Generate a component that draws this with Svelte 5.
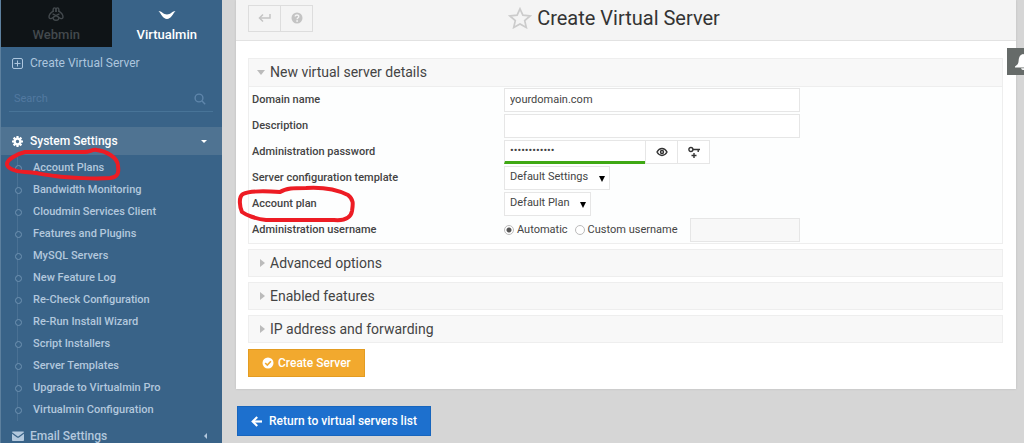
<script>
  const links = [
    'Account Plans',
    'Bandwidth Monitoring',
    'Cloudmin Services Client',
    'Features and Plugins',
    'MySQL Servers',
    'New Feature Log',
    'Re-Check Configuration',
    'Re-Run Install Wizard',
    'Script Installers',
    'Server Templates',
    'Upgrade to Virtualmin Pro',
    'Virtualmin Configuration'
  ];
  const closed = ['Advanced options', 'Enabled features', 'IP address and forwarding'];

  let domain = $state('yourdomain.com');
  let description = $state('');
  let password = $state('abcdefghijkl');
  let mode = $state('auto');
  let custom = $state('');
  let reveal = $state(false);
</script>

<div class="shell">
  <aside class="sidebar">
    <nav class="tabs" aria-label="Product">
      <a href="#webmin" class="tab">
        <svg width="16" height="14" viewBox="0 0 16 14" fill="none" stroke="currentColor" stroke-width="1.4" stroke-linejoin="round">
          <path d="M5.2 5V2.2a1.3 1.3 0 0 1 2.6 0V5M8.2 5V2.2a1.3 1.3 0 0 1 2.6 0V5" />
          <path d="M5.2 4.2C3 5.6 1 8 1 10c0 1.4 1.300 2 2.600 1.400L5.600 10.400M10.800 4.200C13 5.600 15 8 15 10c0 1.400-1.300 2-2.600 1.400L10.400 10.400" />
          <path d="M4.600 6.800L8 8.600l3.400-1.800M5.400 10.200C4.600 12 6 13.300 8 13.300s3.400-1.300 2.600-3.100L8 8.600z" />
        </svg>
        <span>Webmin</span>
      </a>
      <a href="#virtualmin" class="tab active">
        <svg width="18" height="14" viewBox="0 0 18 14" fill="currentColor">
          <path d="M.5 4C3.500 4 5.500 7.500 9 7.500S14.500 4 17.500 4C15 6.500 13 12 9 12S3 6.500 .5 4z" />
        </svg>
        <span>Virtualmin</span>
      </a>
    </nav>

    <a href="#create" class="row create">
      <svg width="11" height="11" viewBox="0 0 11 11" fill="none" stroke="currentColor" stroke-width="1">
        <rect x=".5" y=".5" width="10" height="10" rx="1.500" />
        <path d="M5.500 2.500v6M2.500 5.500h6" />
      </svg>
      <span>Create Virtual Server</span>
    </a>

    <div class="search">
      <input type="text" placeholder="Search" aria-label="Search" />
      <svg width="12" height="12" viewBox="0 0 12 12" fill="none" stroke="currentColor" stroke-width="1.400">
        <circle cx="5" cy="5" r="3.900" />
        <path d="M8 8l3.200 3.200" />
      </svg>
    </div>

    <a href="#system" class="row open">
      <svg width="11" height="11" viewBox="0 0 11 11">
        <circle cx="5.500" cy="5.500" r="2.900" fill="none" stroke="currentColor" stroke-width="2.400" />
        <path d="M5.500 0v2M5.500 9v2M0 5.500h2M9 5.500h2M1.600 1.600l1.400 1.400M8 8l1.400 1.400M9.400 1.600L8 3M3 8L1.600 9.400" stroke="currentColor" stroke-width="2.200" />
      </svg>
      <span>System Settings</span>
      <svg class="end" width="6" height="3" viewBox="0 0 6 3"><path d="M0 0h6L3 3z" fill="currentColor" /></svg>
    </a>

    <ul class="links">
      {#each links as text, i}
        <li>
          <a href="#item-{i}">{text}</a>
          {#if i === 0}
            <svg class="ink side" width="118" height="36" viewBox="4 146 118 36" aria-hidden="true">
              <path d="M26 152H86C91 152 93 149 98 150C106 151 119 157 119 166C120 173 119 177 111 178C98 179 70 178 56 176C44 175 36 172 26 172C16 172 8 168 8 164C8 160 17 154 26 152Z" />
            </svg>
          {/if}
        </li>
      {/each}
    </ul>

    <a href="#email" class="row">
      <svg width="12" height="10" viewBox="0 0 12 10" fill="currentColor">
        <path d="M0 1.200Q0 .5.800.5H11.200Q12 .5 12 1.200L6.600 5.300Q6 5.700 5.400 5.300zM0 2.700L5 6.400Q6 7 7 6.400L12 2.700V9Q12 10 11.200 10H.8Q0 10 0 9z" />
      </svg>
      <span>Email Settings</span>
      <svg class="end" width="3" height="6" viewBox="0 0 3 6"><path d="M3 0v6L0 3z" fill="currentColor" /></svg>
    </a>
  </aside>

  <main>
    <section class="card">
      <header>
        <div class="tools">
          <button type="button" aria-label="Go back">
            <svg width="13" height="10" viewBox="0 0 13 10" fill="none" stroke="currentColor" stroke-width="1.500">
              <path d="M12 1v4H2" /><path d="M5 1.500L1.500 5 5 8.500" />
            </svg>
          </button>
          <button type="button" aria-label="Help">
            <svg width="12" height="12" viewBox="0 0 12 12">
              <circle cx="6" cy="6" r="5.500" fill="currentColor" />
              <path d="M4.200 4.600C4.200 2.400 7.900 2.500 7.800 4.600C7.800 5.800 6.100 5.700 6.100 7.200" fill="none" stroke="#f4f4f4" stroke-width="1.400" />
              <circle cx="6.100" cy="9" r=".9" fill="#f4f4f4" />
            </svg>
          </button>
        </div>
        <h1>
          <svg width="24" height="22" viewBox="0 0 24 22" fill="none" stroke="#ccc" stroke-width="1.700">
            <path d="M12 1.800L14.900 8.200L22 9L16.700 13.600L18.300 20.500L12 17L5.700 20.500L7.300 13.600L2 9L9.100 8.200z" />
          </svg>
          <span>Create Virtual Server</span>
        </h1>
      </header>

      <form onsubmit={(e) => e.preventDefault()}>
        <details open>
          <summary><i class="tri down"></i>New virtual server details</summary>
          <div class="fields">
            <div class="field">
              <label for="domain">Domain name</label>
              <div class="control"><input id="domain" class="wide" type="text" bind:value={domain} /></div>
            </div>
            <div class="field">
              <label for="desc">Description</label>
              <div class="control"><input id="desc" class="wide" type="text" bind:value={description} /></div>
            </div>
            <div class="field">
              <label for="pass">Administration password</label>
              <div class="control joined">
                <input id="pass" class="pass" type={reveal ? 'text' : 'password'} bind:value={password} />
                <button type="button" aria-label="Show password" onclick={() => (reveal = !reveal)}>
                  <svg width="12" height="10" viewBox="0 0 12 10" fill="none" stroke="currentColor" stroke-width="1.400">
                    <path d="M1 5C3.500 .4 8.500 .4 11 5C8.500 9.600 3.500 9.600 1 5z" />
                    <circle cx="6" cy="5" r="1.500" />
                  </svg>
                </button>
                <button type="button" aria-label="Generate password">
                  <svg width="12" height="12" viewBox="0 0 12 12" fill="none" stroke="currentColor" stroke-width="1.400">
                    <circle cx="2.900" cy="3.500" r="2" />
                    <path d="M5 3.500h7M10.200 3.500v2.500M6 7v5M3.500 9.500h5" />
                  </svg>
                </button>
              </div>
            </div>
            <div class="field">
              <label for="template">Server configuration template</label>
              <div class="control">
                <span class="pick">
                  <select id="template"><option>Default Settings</option></select>
                  <svg width="6" height="6" viewBox="0 0 6 6"><path d="M0 0h6L3 6z" /></svg>
                </span>
              </div>
            </div>
            <div class="field">
              <label for="plan">Account plan
                <svg class="ink main" width="122" height="40" viewBox="235 183 122 40" aria-hidden="true">
                  <path d="M280 191C266 190 249 190 243 193C238 196 240 207 242 211C246 214 256 218 266 219H334C346 220 351 216 352 210C353 203 354 199 348 194C338 189 322 186 306 187C294 187 286 187 280 191Z" />
                </svg>
              </label>
              <div class="control">
                <span class="pick">
                  <select id="plan"><option>Default Plan</option></select>
                  <svg width="6" height="6" viewBox="0 0 6 6"><path d="M0 0h6L3 6z" /></svg>
                </span>
              </div>
            </div>
            <div class="field">
              <span class="label" id="user-label">Administration username</span>
              <div class="control wide" role="radiogroup" aria-labelledby="user-label">
                <label class="radio"><input type="radio" name="mode" value="auto" bind:group={mode} />Automatic</label>
                <label class="radio"><input type="radio" name="mode" value="custom" bind:group={mode} />Custom username</label>
                <input class="custom" type="text" aria-label="Custom username" disabled={mode === 'auto'} bind:value={custom} />
              </div>
            </div>
          </div>
        </details>

        {#each closed as title}
          <details>
            <summary><i class="tri"></i>{title}</summary>
          </details>
        {/each}

        <button type="submit" class="submit">
          <svg width="12" height="12" viewBox="0 0 12 12">
            <circle cx="6" cy="6" r="5.500" fill="#fff" />
            <path d="M3.200 6L5.300 8L8.900 4.300" fill="none" stroke="#f0a92e" stroke-width="1.600" />
          </svg>
          Create Server
        </button>
      </form>
    </section>

    <a class="return" href="#list">
      <svg width="11" height="11" viewBox="0 0 11 11" fill="none" stroke="#fff" stroke-width="2.200">
        <path d="M11 5.500H2" /><path d="M6.200 1L1.700 5.500L6.200 10" />
      </svg>
      Return to virtual servers list
    </a>
  </main>

  <button class="bell" type="button" aria-label="Notifications">
    <svg width="16" height="16" viewBox="0 0 16 16" fill="#fff">
      <path d="M8 0C4.500 1 4 3.500 3.600 7C3.400 9.500 2.400 11 0 12.500V13.500H16V12.500C13.600 11 12.600 9.500 12.400 7C12 3.500 11.500 1 8 0zM6 14.200h4Q9.500 16 8 16T6 14.200z" />
    </svg>
  </button>
</div>

<style>
  :global(body) {
    margin: 0;
    background: #d6d6d6;
  }
  .shell {
    display: flex;
    height: 100vh;
    overflow: hidden;
    font: 11px/16px Roboto, sans-serif;
    color: #444;
  }
  .shell :global(*) {
    box-sizing: border-box;
  }
  a {
    color: inherit;
    text-decoration: none;
  }
  svg {
    flex: none;
    display: block;
  }
  button,
  input,
  select {
    font: inherit;
    color: inherit;
    margin: 0;
    border-radius: 0;
  }

  .sidebar {
    flex: none;
    width: 222px;
    background: #396388;
    border-left: 1px solid #5d809e;
    color: #b3c8dd;
    overflow: hidden;
  }
  .tabs {
    display: grid;
    grid-template-columns: 1fr 1fr;
  }
  .tab {
    display: flex;
    flex-direction: column;
    align-items: center;
    gap: 6px;
    padding: 7px 0 4px;
    background: #0f1417;
    color: #43494d;
    font-size: 13px;
    font-weight: 500;
  }
  .tab.active {
    background: none;
    color: #fff;
  }
  .row {
    display: flex;
    align-items: center;
    gap: 6px;
    height: 28px;
    padding: 0 15px 0 11px;
    font-size: 12px;
    font-weight: 500;
  }
  .create {
    margin-top: 2px;
    color: #adc6de;
    gap: 7px;
    font-weight: 400;
  }
  .open {
    background: #4f7392;
    color: #fff;
    gap: 7px;
  }
  .end {
    margin-left: auto;
  }
  .search {
    display: flex;
    align-items: center;
    height: 25px;
    margin: 10px 9px 15px 8px;
    padding: 0 7px 0 5px;
    border-bottom: 1px solid #487498;
    color: #5f86ab;
  }
  .search input {
    flex: 1;
    min-width: 0;
    padding: 0;
    border: 0;
    background: none;
    outline: 0;
  }
  .search input::placeholder {
    color: #5279a0;
  }
  .links {
    margin: 0;
    padding: 2px 0 1px;
    list-style: none;
    font-weight: 500;
  }
  .links li {
    position: relative;
    padding-left: 32px;
    line-height: 22px;
  }
  .links li::before {
    content: '';
    position: absolute;
    left: 16px;
    top: 0;
    bottom: 0;
    border-left: 1px solid #4a7194;
  }
  .links li::after {
    content: '';
    position: absolute;
    left: 14px;
    top: 8px;
    width: 5px;
    height: 5px;
    border: 1px solid #6f92b2;
    border-radius: 50%;
    background: #396388;
  }
  .ink {
    position: absolute;
    z-index: 2;
    fill: none;
    stroke: #ed1c24;
    stroke-width: 4;
    pointer-events: none;
  }
  .ink.side {
    left: 2px;
    top: -11px;
  }
  .ink.main {
    left: -17px;
    top: -12px;
  }

  main {
    flex: 1;
    min-width: 0;
    padding: 0 8px 0 14px;
  }
  .card {
    background: #fff;
    box-shadow: 0 0 2px #bbb;
  }
  header {
    display: grid;
    grid-template-columns: 1fr auto 1fr;
    align-items: center;
    height: 41px;
    padding: 0 36px 4px 12px;
    background: #f4f4f4;
    border-bottom: 1px solid #e2e2e2;
  }
  .tools {
    display: flex;
  }
  .tools button {
    display: grid;
    place-items: center;
    width: 33px;
    height: 27px;
    padding: 0;
    border: 1px solid #ddd;
    background: none;
    color: #c4c4c4;
  }
  .tools button + button {
    margin-left: -1px;
  }
  h1 {
    display: flex;
    align-items: center;
    gap: 5px;
    margin: 0;
    font-size: 20px;
    line-height: 24px;
    font-weight: 400;
    color: #333;
  }
  form {
    display: flex;
    flex-direction: column;
    align-items: flex-start;
    gap: 5px;
    padding: 17px 13px 12px 12px;
  }
  details {
    align-self: stretch;
    border: 1px solid #eee;
  }
  summary {
    display: flex;
    align-items: center;
    height: 26px;
    padding: 0 8px 1px;
    background: #f8f8f8;
    list-style: none;
    font-size: 14px;
    color: #444;
  }
  details[open] summary {
    height: 28px;
    border-bottom: 1px solid #eee;
  }
  .tri {
    width: 13px;
  }
  .tri::before {
    content: '';
    display: block;
    width: 0;
    margin-left: 3px;
    border: 4px solid transparent;
    border-left: 5px solid #bbb;
    border-right: 0;
  }
  .tri.down::before {
    margin-left: 0;
    border: 4px solid transparent;
    border-top: 5px solid #bbb;
    border-bottom: 0;
  }
  .fields {
    display: grid;
    gap: 2px;
    padding: 1px 3px;
    background: #fdfefe;
  }
  .field {
    display: grid;
    grid-template-columns: 1fr 2fr;
    align-items: center;
    height: 24px;
  }
  .field > label,
  .label {
    position: relative;
    font-weight: 500;
    color: #444;
  }
  .control {
    display: flex;
    align-items: center;
    height: 24px;
    margin-left: 3px;
  }
  .control input[type='text'],
  .control input[type='password'],
  .control select {
    height: 24px;
    padding: 0 5px 2px;
    border: 1px solid #e6e6e6;
    background: #fff;
    outline: 0;
  }
  .wide {
    width: 296px;
  }
  .control .pass[type] {
    width: 142px;
    border-bottom: 3px solid #3fa814;
  }
  .joined button {
    display: grid;
    place-items: center;
    width: 33px;
    height: 24px;
    margin-left: -1px;
    padding: 0;
    border: 1px solid #e6e6e6;
    background: #fff;
    color: #333;
  }
  .pick {
    display: flex;
    align-items: center;
  }
  .control select {
    appearance: none;
    padding-right: 20px;
  }
  .pick svg {
    margin: 2px 0 0 -11px;
    pointer-events: none;
  }
  .radio {
    display: flex;
    align-items: center;
    gap: 3px;
    margin-right: 7px;
    white-space: nowrap;
  }
  .radio input {
    appearance: none;
    width: 10px;
    height: 10px;
    border: 1px solid #bbb;
    border-radius: 50%;
    background: #fff;
  }
  .radio input:checked {
    background: radial-gradient(circle, #555 0 2px, #fff 3px);
  }
  .control .custom[type] {
    width: 110px;
    margin-left: auto;
    background: #f8f8f8;
  }
  .submit,
  .return {
    display: inline-flex;
    align-items: center;
    color: #fff;
    font-size: 12px;
    font-weight: 500;
  }
  .submit {
    gap: 4px;
    height: 28px;
    margin-top: 1px;
    padding: 0 13px;
    border: 1px solid #e39c22;
    background: #f2a92e;
  }
  .return {
    gap: 7px;
    height: 30px;
    margin: 17px 0 0 1px;
    padding: 0 13px;
    border: 1px solid #1765bd;
    background: #1d70ce;
  }
  .bell {
    position: fixed;
    top: 48px;
    right: 0;
    width: 17px;
    height: 27px;
    padding: 0 0 0 8px;
    border: 0;
    background: #666b69;
    overflow: hidden;
  }
</style>
